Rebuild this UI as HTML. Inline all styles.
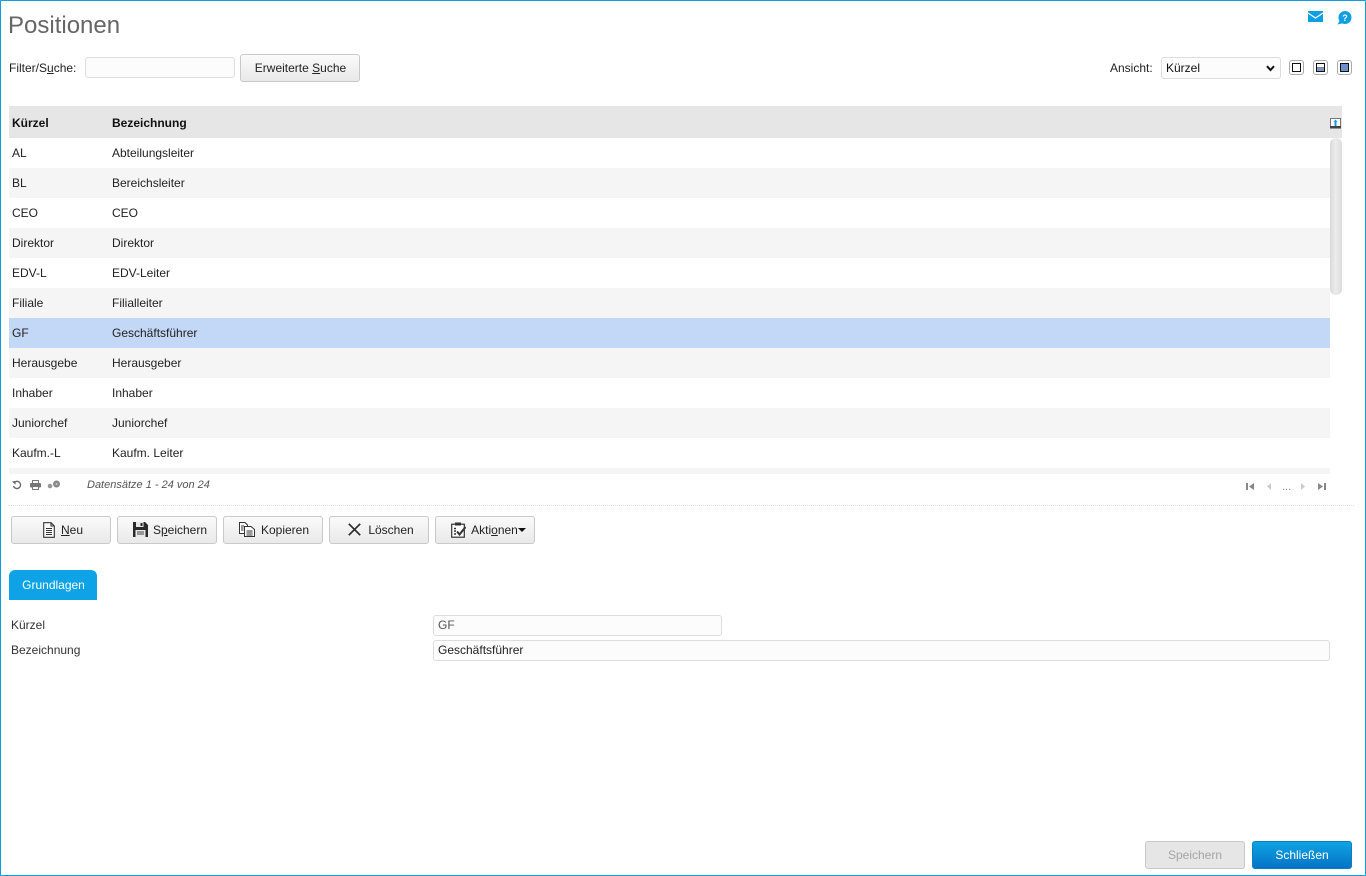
<!DOCTYPE html>
<html lang="de">
<head>
<meta charset="utf-8">
<title>Positionen</title>
<style>
html,body{margin:0;padding:0;background:#fff}
body{width:1366px;height:876px;position:relative;overflow:hidden;font-family:"Liberation Sans",sans-serif;font-size:12px;color:#222}
.a{position:absolute}
#frame{left:0;top:0;width:1364px;height:874px;border:1px solid #0f9fe0;box-sizing:content-box;pointer-events:none}
.t{position:absolute;white-space:nowrap;line-height:14px}
.btn{position:absolute;box-sizing:border-box;border:1px solid #c9c9c9;border-radius:3px;background:linear-gradient(#fafafa,#e9e9e9);height:28px;text-align:center;line-height:26px;color:#222;white-space:nowrap}
.inp{position:absolute;box-sizing:border-box;border:1px solid #ddd;border-radius:3px;background:#fcfcfc;line-height:19px;padding-left:4px}
.row{position:absolute;left:9px;width:1321px;height:30px}
.row span{position:absolute;top:8px;line-height:14px;white-space:nowrap}
.row span:first-child{left:3px}
.row span:last-child{left:103px}
.g{background:#f5f5f5}
.vb{position:absolute;top:60px;width:15px;height:15px;box-sizing:border-box;border:1px solid #aaa;border-radius:3px;background:#fff;padding:2px}
.vb i{display:block;width:9px;height:9px;box-sizing:border-box;border:1px solid #111}
u{text-decoration:underline}
svg{position:absolute;display:block}
</style>
</head>
<body>
<div class="a" id="frame"></div>

<div class="t" style="left:8px;top:12px;font-size:24px;line-height:28px;color:#666">Positionen</div>

<svg style="left:1308px;top:11px" width="15" height="11" viewBox="0 0 15 11"><rect width="15" height="11" fill="#0e9fe2"/><path d="M0 2 L7.5 7 L15 2" fill="none" stroke="#fff" stroke-width="1.2"/></svg>
<svg style="left:1337px;top:11px" width="15" height="14" viewBox="0 0 15 14"><circle cx="8" cy="6.5" r="6.5" fill="#0e9fe2"/><path d="M3 9 L0.5 13.5 L7 12Z" fill="#0e9fe2"/><text x="8" y="10" font-size="9" font-weight="bold" text-anchor="middle" fill="#fff" font-family="Liberation Sans">?</text></svg>

<div class="t" style="left:9px;top:61px">Filter/S<u>u</u>che:</div>
<div class="inp" style="left:85px;top:57px;width:150px;height:21px"></div>
<div class="btn" style="left:240px;top:54px;width:120px;padding-left:1px">Erweiterte <u>S</u>uche</div>

<div class="t" style="left:1110px;top:61px">Ansicht:</div>
<div class="inp" style="left:1161px;top:57px;width:120px;height:22px;padding-left:4px;line-height:20px;color:#111">Kürzel</div>
<svg style="left:1266px;top:65px" width="9" height="7" viewBox="0 0 9 7"><path d="M1 1.2 L4.5 5 L8 1.2" fill="none" stroke="#111" stroke-width="2"/></svg>
<div class="vb" style="left:1289px"><i></i></div>
<div class="vb" style="left:1313px"><i style="background:linear-gradient(#fff 50%,#111 50%,#111 60%,#7f97c4 60%)"></i></div>
<div class="vb" style="left:1337px"><i style="background:#6f8fcb"></i></div>

<!-- table -->
<div class="a" style="left:9px;top:106px;width:1333px;height:32px;background:#e6e6e6"></div>
<div class="t" style="left:12px;top:116px;font-weight:bold;color:#111">Kürzel</div>
<div class="t" style="left:112px;top:116px;font-weight:bold;color:#111">Bezeichnung</div>
<svg style="left:1330px;top:118px" width="11" height="11" viewBox="0 0 11 11"><rect x="0.5" y="0.5" width="10" height="8" fill="#fff" stroke="#777"/><rect x="0" y="8" width="11" height="2.5" fill="#444"/><path d="M5.5 1.5 L7.5 4 H6.5 V8 H4.5 V4 H3.5Z" fill="#0e9fe2"/></svg>

<div class="row" style="top:138px"><span>AL</span><span>Abteilungsleiter</span></div>
<div class="row g" style="top:168px"><span>BL</span><span>Bereichsleiter</span></div>
<div class="row" style="top:198px"><span>CEO</span><span>CEO</span></div>
<div class="row g" style="top:228px"><span>Direktor</span><span>Direktor</span></div>
<div class="row" style="top:258px"><span>EDV-L</span><span>EDV-Leiter</span></div>
<div class="row g" style="top:288px"><span>Filiale</span><span>Filialleiter</span></div>
<div class="row" style="top:318px;background:#c3d7f6"><span>GF</span><span>Geschäftsführer</span></div>
<div class="row g" style="top:348px"><span>Herausgebe</span><span>Herausgeber</span></div>
<div class="row" style="top:378px"><span>Inhaber</span><span>Inhaber</span></div>
<div class="row g" style="top:408px"><span>Juniorchef</span><span>Juniorchef</span></div>
<div class="row" style="top:438px"><span>Kaufm.-L</span><span>Kaufm. Leiter</span></div>
<div class="a g" style="left:9px;top:468px;width:1321px;height:6px"></div>

<div class="a" style="left:1330px;top:138px;width:12px;height:157px;border-radius:6px;background:linear-gradient(90deg,#d8d8d8,#ececec 45%,#dcdcdc)"></div>

<!-- pager -->
<svg style="left:12px;top:480px" width="10" height="10" viewBox="0 0 10 10"><path d="M2.2 2.6 A3.6 3.6 0 1 1 1.5 6" fill="none" stroke="#666" stroke-width="1.3"/><path d="M0 1.5 L3.8 1 L3.4 4.6Z" fill="#666"/></svg>
<svg style="left:30px;top:480px" width="11" height="10" viewBox="0 0 11 10"><rect x="2.5" y="0.5" width="6" height="3" fill="none" stroke="#777"/><rect x="0" y="3" width="11" height="4.5" rx="1" fill="#777"/><rect x="2.5" y="6.5" width="6" height="3" fill="#fff" stroke="#777"/></svg>
<svg style="left:47px;top:480px" width="14" height="10" viewBox="0 0 14 10"><circle cx="3" cy="6" r="2.3" fill="#999"/><circle cx="9.5" cy="4" r="3.5" fill="#888"/><circle cx="9.5" cy="4" r="1" fill="#ccc"/></svg>
<div class="t" style="left:87px;top:478px;font-size:11px;font-style:italic;color:#555">Datensätze 1 - 24 von 24</div>
<svg style="left:1245px;top:482px" width="10" height="9" viewBox="0 0 10 9"><rect x="1" y="1" width="2" height="7" fill="#888"/><path d="M9 1 V8 L4 4.5Z" fill="#888"/></svg>
<svg style="left:1265px;top:482px" width="7" height="9" viewBox="0 0 7 9"><path d="M6 1 V8 L2 4.5Z" fill="#ccc"/></svg>
<div class="t" style="left:1282px;top:480px;font-size:11px;color:#888">...</div>
<svg style="left:1300px;top:482px" width="7" height="9" viewBox="0 0 7 9"><path d="M1 1 V8 L5 4.5Z" fill="#ccc"/></svg>
<svg style="left:1317px;top:482px" width="10" height="9" viewBox="0 0 10 9"><path d="M1 1 V8 L6 4.5Z" fill="#888"/><rect x="7" y="1" width="2" height="7" fill="#888"/></svg>
<div class="a" style="left:8px;top:505px;width:1346px;height:0;border-top:1px dotted #e2e2e2"></div>

<!-- toolbar -->
<div class="btn" style="left:11px;top:516px;width:100px;padding-left:22px"><u>N</u>eu</div>
<svg style="left:43px;top:522px" width="12" height="16" viewBox="0 0 12 16"><path d="M0.7 0.7 H8 L11.3 4 V15.3 H0.7Z M8 0.7 V4 H11.3" fill="#fff" stroke="#333" stroke-width="1.1"/><path d="M3 6.5 H9 M3 8.5 H9 M3 10.5 H9 M3 12.5 H9" stroke="#333"/></svg>

<div class="btn" style="left:117px;top:516px;width:100px;padding-left:26px">S<u>p</u>eichern</div>
<svg style="left:133px;top:522px" width="15" height="15" viewBox="0 0 15 15"><path d="M0 0 H12 L15 3 V15 H0Z" fill="#2a2a2a"/><rect x="3" y="0" width="7.5" height="5" fill="#e8e8e8"/><rect x="7.5" y="1" width="2" height="3" fill="#2a2a2a"/><rect x="2.5" y="8" width="10" height="7" fill="#e8e8e8"/><path d="M4 10 H11 M4 12 H11" stroke="#444"/></svg>

<div class="btn" style="left:223px;top:516px;width:100px;padding-left:24px">Kopieren</div>
<svg style="left:239px;top:522px" width="16" height="15" viewBox="0 0 16 15"><path d="M0.5 0.5 H6 L8.5 3 V11.5 H0.5Z" fill="#fff" stroke="#333"/><path d="M5.5 4.5 H12 L15.5 7.5 V14.5 H5.5Z" fill="#fff" stroke="#333"/><path d="M2 4 H5 M2 6 H4.5 M2 8 H4.5 M7.5 9 H13.5 M7.5 11 H13.5 M7.5 13 H13.5" stroke="#333" stroke-width="0.9"/></svg>

<div class="btn" style="left:329px;top:516px;width:100px;padding-left:24px">Löschen</div>
<svg style="left:348px;top:523px" width="13" height="13" viewBox="0 0 13 13"><path d="M0.8 0.8 L12.2 12.2 M12.2 0.8 L0.8 12.2" stroke="#2a2a2a" stroke-width="1.7"/></svg>

<div class="btn" style="left:435px;top:516px;width:100px;padding-left:19px">Akti<u>o</u>nen</div>
<svg style="left:451px;top:522px" width="15" height="16" viewBox="0 0 15 16"><rect x="0.7" y="2.2" width="12.6" height="13" fill="#fff" stroke="#333" stroke-width="1.2"/><rect x="4" y="0.5" width="6" height="3" fill="#333"/><path d="M3 6.5 H5 M3 9 H5 M3 12 H5" stroke="#333" stroke-width="1.4"/><path d="M6 9.5 L8.5 12.5 L14.5 5" fill="none" stroke="#333" stroke-width="2"/></svg>
<svg style="left:518px;top:528px" width="8" height="4" viewBox="0 0 8 4"><path d="M0 0 H8 L4 4Z" fill="#111"/></svg>

<!-- tab -->
<div class="a" style="left:9px;top:570px;width:88px;height:30px;background:#0ea3e6;border-radius:6px 6px 0 0;color:#fff;text-align:center;line-height:30px;padding-left:1px;box-sizing:border-box">Grundlagen</div>

<div class="t" style="left:11px;top:618px;color:#333">Kürzel</div>
<div class="t" style="left:11px;top:643px;color:#333">Bezeichnung</div>
<div class="inp" style="left:433px;top:615px;width:289px;height:21px;color:#555">GF</div>
<div class="inp" style="left:433px;top:640px;width:897px;height:21px;color:#222">Geschäftsführer</div>

<!-- footer -->
<div class="btn" style="left:1145px;top:841px;width:100px;background:#e6e6e6;color:#a5a5a5">Speichern</div>
<div class="btn" style="left:1252px;top:841px;width:100px;border:1px solid #0a7fc4;background:linear-gradient(#0ea3e2,#0673c6);color:#fff">Schließen</div>
</body>
</html>
